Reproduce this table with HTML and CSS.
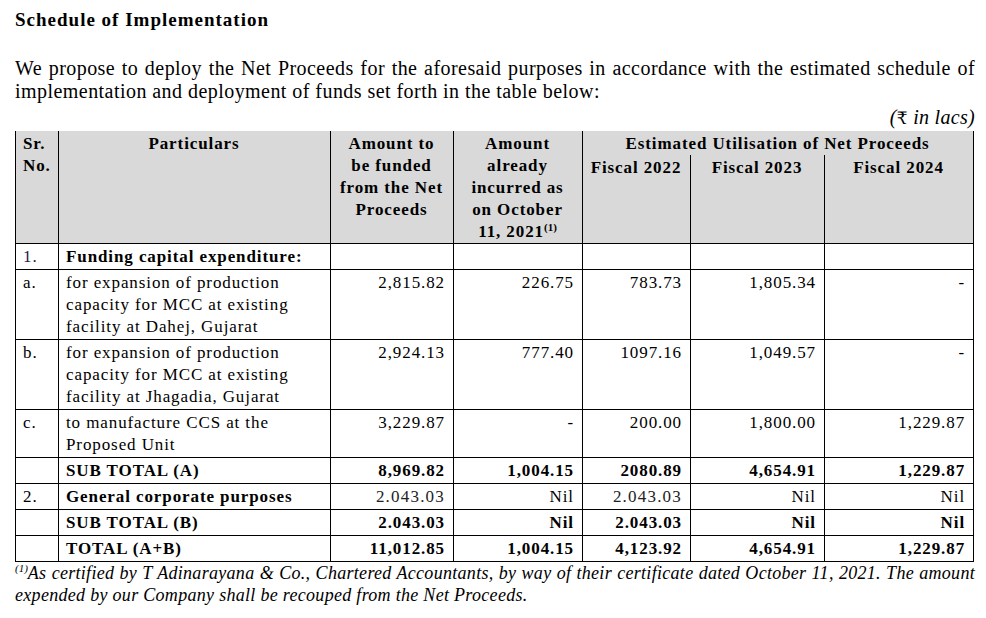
FILE: index.html
```html
<!DOCTYPE html>
<html>
<head>
<meta charset="utf-8">
<title>Schedule of Implementation</title>
<link rel="stylesheet" href="styles.css">
</head>
<body>
<div class="page">
  <h1 class="title">Schedule of Implementation</h1>
  <p class="intro">We propose to deploy the Net Proceeds for the aforesaid purposes in accordance with the estimated schedule of implementation and deployment of funds set forth in the table below:</p>
  <div class="unit">(<span class="rupee">₹</span> in lacs)</div>
  <table class="sched">
    <colgroup>
      <col class="c-sr">
      <col class="c-part">
      <col class="c-amt">
      <col class="c-inc">
      <col class="c-f22">
      <col class="c-f23">
      <col class="c-f24">
    </colgroup>
    <thead>
      <tr class="h1">
        <th rowspan="2" class="left">Sr.<br>No.</th>
        <th rowspan="2">Particulars</th>
        <th rowspan="2">Amount to be funded from the Net Proceeds</th>
        <th rowspan="2">Amount already incurred as on October 11,&nbsp;2021<sup>(1)</sup></th>
        <th colspan="3" class="est">Estimated Utilisation of Net Proceeds</th>
      </tr>
      <tr class="h2">
        <th class="fy">Fiscal 2022</th>
        <th class="fy">Fiscal 2023</th>
        <th class="fy">Fiscal 2024</th>
      </tr>
    </thead>
    <tbody>
      <tr>
        <td class="sr navy">1.</td>
        <td class="b">Funding capital expenditure:</td>
        <td></td><td></td><td></td><td></td><td></td>
      </tr>
      <tr>
        <td class="sr">a.</td>
        <td>for expansion of production capacity for MCC at existing facility at Dahej, Gujarat</td>
        <td class="num">2,815.82</td>
        <td class="num">226.75</td>
        <td class="num">783.73</td>
        <td class="num">1,805.34</td>
        <td class="num">-</td>
      </tr>
      <tr>
        <td class="sr">b.</td>
        <td>for expansion of production capacity for MCC at existing facility at Jhagadia, Gujarat</td>
        <td class="num">2,924.13</td>
        <td class="num">777.40</td>
        <td class="num">1097.16</td>
        <td class="num">1,049.57</td>
        <td class="num">-</td>
      </tr>
      <tr>
        <td class="sr">c.</td>
        <td>to manufacture CCS at the Proposed Unit</td>
        <td class="num">3,229.87</td>
        <td class="num">-</td>
        <td class="num">200.00</td>
        <td class="num">1,800.00</td>
        <td class="num">1,229.87</td>
      </tr>
      <tr class="bold">
        <td></td>
        <td>SUB TOTAL (A)</td>
        <td class="num">8,969.82</td>
        <td class="num">1,004.15</td>
        <td class="num">2080.89</td>
        <td class="num">4,654.91</td>
        <td class="num">1,229.87</td>
      </tr>
      <tr>
        <td class="sr">2.</td>
        <td class="b">General corporate purposes</td>
        <td class="num light">2.043.03</td>
        <td class="num">Nil</td>
        <td class="num light">2.043.03</td>
        <td class="num">Nil</td>
        <td class="num">Nil</td>
      </tr>
      <tr class="bold">
        <td></td>
        <td>SUB TOTAL (B)</td>
        <td class="num">2.043.03</td>
        <td class="num">Nil</td>
        <td class="num">2.043.03</td>
        <td class="num">Nil</td>
        <td class="num">Nil</td>
      </tr>
      <tr class="bold">
        <td></td>
        <td>TOTAL (A+B)</td>
        <td class="num">11,012.85</td>
        <td class="num">1,004.15</td>
        <td class="num">4,123.92</td>
        <td class="num">4,654.91</td>
        <td class="num">1,229.87</td>
      </tr>
    </tbody>
  </table>
  <p class="note"><sup class="fn">(1)</sup>As certified by T Adinarayana &amp; Co., Chartered Accountants, by way of their certificate dated October 11, 2021. The amount expended by our Company shall be recouped from the Net Proceeds.</p>
</div>
</body>
</html>
```

FILE: styles.css
```css
html, body {
  margin: 0;
  padding: 0;
  background: #ffffff;
}

body {
  font-family: "Liberation Serif", "Times New Roman", serif;
  color: #000000;
}

.page {
  width: 960px;
  padding: 8px 11px 0 15px;
}

.title {
  margin: 0;
  font-size: 19px;
  line-height: 23px;
  font-weight: bold;
  letter-spacing: 1px;
}

.intro {
  margin: 26px 0 0 0;
  font-size: 20px;
  line-height: 23px;
  letter-spacing: 0.45px;
  text-align: justify;
}

.unit {
  margin-top: 3px;
  font-size: 20px;
  line-height: 23px;
  font-style: italic;
  letter-spacing: 0.3px;
  text-align: right;
}

.rupee {
  font-style: normal;
  font-family: "DejaVu Serif", "Liberation Serif", serif;
  font-size: 17px;
}

.sched {
  margin-top: 1px;
  width: 959px;
  table-layout: fixed;
  border-collapse: collapse;
  font-size: 17px;
  line-height: 22px;
  letter-spacing: 0.9px;
}

.c-sr { width: 43px; }
.c-part { width: 272px; }
.c-amt { width: 123px; }
.c-inc { width: 129px; }
.c-f22 { width: 108px; }
.c-f23 { width: 134px; }
.c-f24 { width: 149px; }

.sched th,
.sched td {
  border: 1px solid #000000;
  padding: 2px 8px 1px 7px;
  vertical-align: top;
}

.sched th {
  background: #d9d9d9;
  font-weight: bold;
  text-align: center;
  border-top: none;
  padding-bottom: 0;
}

.sched th.left {
  text-align: left;
}

.sched th.est {
  border-bottom: none;
  height: 21px;
  padding-top: 2px;
  padding-bottom: 0;
}

.sched th.fy {
  border-top: none;
  padding-top: 2px;
}

.sched sup {
  font-size: 11px;
  line-height: 0;
  letter-spacing: 0;
  vertical-align: 6px;
}

.sched .num {
  text-align: right;
}

.sched .b,
.sched tr.bold td {
  font-weight: bold;
}

.navy {
  color: #1c1c4c;
}

.light {
  color: #222222;
  letter-spacing: 1.2px;
}

.note {
  margin: 0;
  font-size: 18px;
  line-height: 22px;
  font-style: italic;
  letter-spacing: 0.3px;
  text-align: justify;
}

.note .fn {
  font-size: 11px;
  line-height: 0;
  letter-spacing: 0;
  vertical-align: 7px;
}
```
